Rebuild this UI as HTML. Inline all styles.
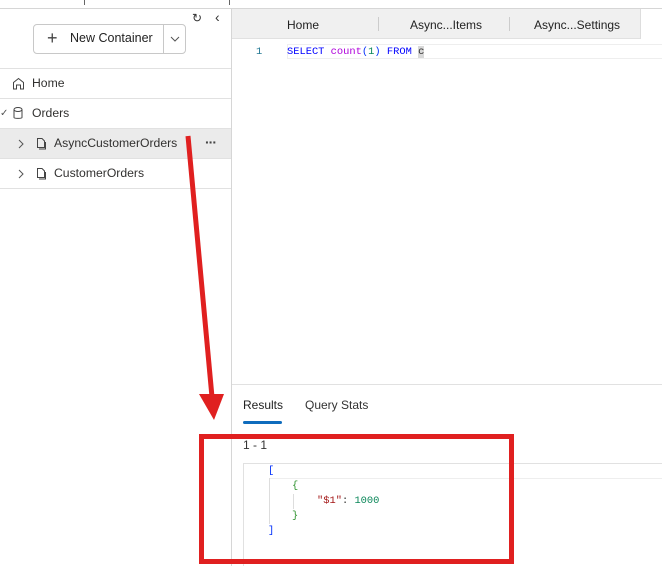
<!DOCTYPE html>
<html><head><style>
*{margin:0;padding:0;box-sizing:border-box}
body{width:662px;height:566px;overflow:hidden;background:#fff;font-family:"Segoe UI","Liberation Sans",sans-serif;color:#323130;position:relative;font-size:12px}
.abs{position:absolute}
.mono{font-family:"Liberation Mono",monospace;font-size:10.4px}
.row{position:absolute;left:0;width:231px;height:30px;border-bottom:1px solid #e1e1e1;line-height:29px;font-size:12.2px}
</style></head><body>
<div class="abs" style="left:0;top:8px;width:662px;height:1px;background:#d6d6d6"></div>
<div class="abs" style="left:84px;top:0;width:1px;height:5px;background:#666"></div>
<div class="abs" style="left:229px;top:0;width:1px;height:5px;background:#666"></div>
<div class="abs" style="left:231px;top:9px;width:1px;height:557px;background:#d6d6d6"></div>
<div class="abs" style="left:192px;top:11px;font-size:12px;color:#333">↻</div>
<div class="abs" style="left:215px;top:9px;font-size:14px;color:#333">‹</div>
<div class="abs" style="left:33px;top:24px;width:153px;height:30px;border:1px solid #c8c8c8;border-radius:4px"></div>
<div class="abs" style="left:163px;top:24px;width:1px;height:30px;background:#c8c8c8"></div>
<div class="abs" style="left:47px;top:28px;font-size:18px;color:#444;line-height:20px">+</div>
<div class="abs" style="left:70px;top:31px;font-size:12.5px;color:#222;font-weight:500">New Container</div>
<svg class="abs" style="left:170px;top:36px" width="10" height="6"><path d="M1 1l4 4 4-4" stroke="#555" fill="none"/></svg>
<div class="abs" style="left:0;top:68px;width:231px;height:1px;background:#e1e1e1"></div>
<div class="row" style="top:69px"><svg class="abs" style="left:12px;top:8px" width="13" height="13"><path d="M1.5 12V5.5L6.5 1.5l5 4V12H8.5V8h-4v4z" stroke="#444" fill="none"/></svg><span style="position:absolute;left:32px">Home</span></div>
<div class="row" style="top:99px"><span style="position:absolute;left:0;font-size:10px;color:#555">✓</span><svg class="abs" style="left:13px;top:8px" width="10" height="13"><ellipse cx="5" cy="2.5" rx="4" ry="2" stroke="#444" fill="none"/><path d="M1 2.5V10.5c0 1.2 8 1.2 8 0V2.5" stroke="#444" fill="none"/></svg><span style="position:absolute;left:32px">Orders</span></div>
<div class="row" style="top:129px;background:#ebebeb"><svg class="abs" style="left:18px;top:10px" width="6" height="10"><path d="M1 1l4 4-4 4" stroke="#555" fill="none"/></svg><svg class="abs" style="left:36px;top:8px" width="10" height="13"><path d="M1.5 1.5h4.5l2.5 2.5v6.5h-7z M3 12h6.5V5" stroke="#444" fill="none"/></svg><span style="position:absolute;left:54px">AsyncCustomerOrders</span><span style="position:absolute;left:205px;top:0;font-size:14px;font-weight:bold;color:#444;letter-spacing:-1px;line-height:26px">···</span></div>
<div class="row" style="top:159px"><svg class="abs" style="left:18px;top:10px" width="6" height="10"><path d="M1 1l4 4-4 4" stroke="#555" fill="none"/></svg><svg class="abs" style="left:36px;top:8px" width="10" height="13"><path d="M1.5 1.5h4.5l2.5 2.5v6.5h-7z M3 12h6.5V5" stroke="#444" fill="none"/></svg><span style="position:absolute;left:54px">CustomerOrders</span></div>
<div class="abs" style="left:232px;top:9px;width:409px;height:30px;background:#f0f0f0;border-bottom:1px solid #e1e1e1"></div>
<div class="abs" style="left:640px;top:9px;width:1px;height:30px;background:#ddd"></div>
<div class="abs" style="left:378px;top:17px;width:1px;height:14px;background:#ccc"></div>
<div class="abs" style="left:509px;top:17px;width:1px;height:14px;background:#ccc"></div>
<div class="abs" style="left:287px;top:18px;font-size:12px;color:#222">Home</div>
<div class="abs" style="left:410px;top:18px;font-size:12px;color:#222">Async...Items</div>
<div class="abs" style="left:534px;top:18px;font-size:12px;color:#222">Async...Settings</div>
<div class="abs" style="left:287px;top:44px;width:375px;height:15px;border:1px solid #eee;border-right:none"></div>
<div class="abs mono" style="left:256px;top:46px;color:#237893">1</div>
<div class="abs mono" style="left:287px;top:46px;white-space:pre"><span style="color:#0000ff">SELECT</span> <span style="color:#af00db">count</span><span style="color:#0431fa">(</span><span style="color:#098658">1</span><span style="color:#0431fa">)</span> <span style="color:#0000ff">FROM</span> <span style="background:#d8d8d8">c</span></div>
<div class="abs" style="left:232px;top:384px;width:430px;height:1px;background:#e1e1e1"></div>
<div class="abs" style="left:243px;top:398px;font-size:12px;color:#222">Results</div>
<div class="abs" style="left:243px;top:421px;width:39px;height:3px;background:#0f6cbd;border-radius:2px"></div>
<div class="abs" style="left:305px;top:398px;font-size:12px;color:#333">Query Stats</div>
<div class="abs" style="left:243px;top:438px;font-size:12px;color:#333">1 - 1</div>
<div class="abs" style="left:243px;top:463px;width:419px;height:103px;border-left:1px solid #e1e1e1;border-top:1px solid #e1e1e1"></div>
<div class="abs" style="left:269px;top:478px;width:394px;height:1px;background:#eee"></div>
<div class="abs" style="left:269px;top:478px;width:1px;height:46px;background:#ddd"></div>
<div class="abs" style="left:293px;top:494px;width:1px;height:15px;background:#ddd"></div>
<div class="abs mono" style="left:268px;top:465px;color:#0431fa">[</div>
<div class="abs mono" style="left:292px;top:480px;color:#319331">{</div>
<div class="abs mono" style="left:317px;top:495px;white-space:pre"><span style="color:#a31515">"$1"</span>: <span style="color:#098658">1000</span></div>
<div class="abs mono" style="left:292px;top:510px;color:#319331">}</div>
<div class="abs mono" style="left:268px;top:525px;color:#0431fa">]</div>
<svg class="abs" style="left:0;top:0" width="662" height="566">
<line x1="188" y1="136" x2="212" y2="397" stroke="#e02020" stroke-width="5"/>
<polygon points="199,394 224,394 214,420" fill="#e02020"/>
<rect x="201.5" y="436.5" width="310" height="125" fill="none" stroke="#e02020" stroke-width="5"/>
</svg>
</body></html>
